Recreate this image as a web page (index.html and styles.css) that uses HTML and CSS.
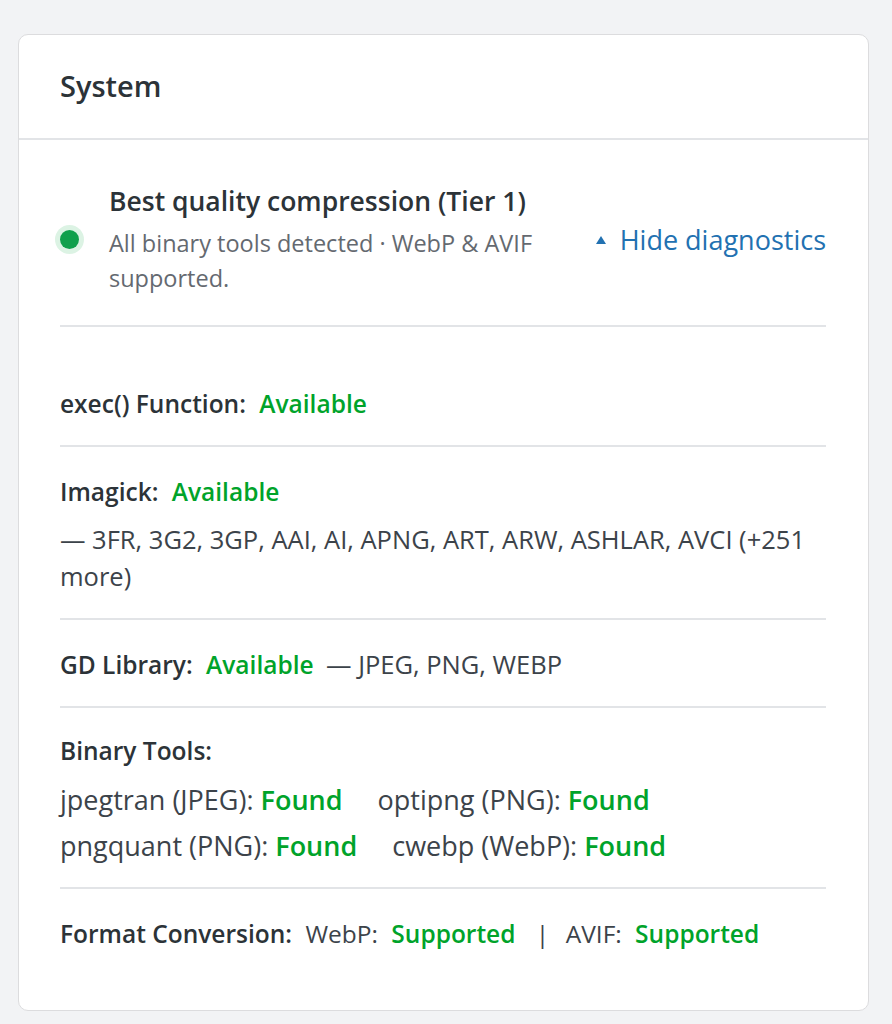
FILE: index.html
```html
<!DOCTYPE html>
<html lang="en">
<head>
<meta charset="UTF-8">
<meta name="viewport" content="width=device-width, initial-scale=1.0">
<title>System</title>
<link rel="stylesheet" href="styles.css">
</head>
<body>
<div class="card">
    <div class="card-header">
        <h2>System</h2>
    </div>
    <div class="card-body">
        <div class="status">
            <span class="dot"></span>
            <div class="status-text">
                <div class="status-title">Best quality compression (Tier 1)</div>
                <div class="status-sub">All binary tools detected · WebP &amp; AVIF supported.</div>
            </div>
            <a href="#" class="toggle"><span class="arrow"></span>Hide diagnostics</a>
        </div>

        <div class="diagnostics">
            <div class="row">
                <span class="label">exec() Function:</span>
                <span class="ok">Available</span>
            </div>
            <div class="row">
                <span class="label">Imagick:</span>
                <span class="ok">Available</span>
                <div class="formats">— 3FR, 3G2, 3GP, AAI, AI, APNG, ART, ARW, ASHLAR, AVCI (+251 more)</div>
            </div>
            <div class="row">
                <span class="label">GD Library:</span>
                <span class="ok">Available</span>
                <span class="plain">— JPEG, PNG, WEBP</span>
            </div>
            <div class="row">
                <span class="label">Binary Tools:</span>
                <div class="tools">
                    <span class="tool">jpegtran (JPEG): <b class="ok">Found</b></span>
                    <span class="tool">optipng (PNG): <b class="ok">Found</b></span>
                    <span class="tool">pngquant (PNG): <b class="ok">Found</b></span>
                    <span class="tool">cwebp (WebP): <b class="ok">Found</b></span>
                </div>
            </div>
            <div class="row last">
                <span class="label">Format Conversion:</span>
                <span class="sublabel">WebP:</span>
                <span class="ok">Supported</span>
                <span class="sep">|</span>
                <span class="sublabel">AVIF:</span>
                <span class="ok">Supported</span>
            </div>
        </div>
    </div>
</div>
</body>
</html>
```

FILE: styles.css
```css
body {
    margin: 0;
    padding: 34px 23px 14px 18px;
    background-color: #f2f3f5;
    font-family: "Open Sans", "Noto Sans", sans-serif;
    color: #3c434a;
}
.card {
    background: #fff;
    border: 1px solid #dcdcde;
    border-radius: 10px;
}
.card-header {
    padding: 33px 41px 34px 41px;
    border-bottom: 2px solid #e2e4e7;
}
.card-header h2 {
    margin: 0;
    font-size: 29px;
    line-height: 36px;
    font-weight: 600;
    color: #2c3338;
}
.card-body {
    padding: 43px 42px 35px 41px;
}
.status {
    display: flex;
    align-items: center;
    padding-bottom: 29px;
    border-bottom: 2px solid #e2e4e7;
}
.dot {
    flex: none;
    width: 19px;
    height: 19px;
    margin: 0 30px 0 0;
    border-radius: 50%;
    background: #10a04c;
    box-shadow: 0 0 0 5px #dcf3e4;
}
.status-text {
    flex: 1;
    max-width: 470px;
}
.status-title {
    font-size: 26.5px;
    line-height: 36px;
    font-weight: 600;
    color: #2c3338;
}
.status-sub {
    margin-top: 7px;
    font-size: 23.5px;
    line-height: 35px;
    color: #646970;
}
.toggle {
    margin-left: auto;
    font-size: 27px;
    line-height: 36px;
    color: #2271b1;
    text-decoration: none;
}
.arrow {
    display: inline-block;
    width: 0;
    height: 0;
    margin-right: 14px;
    vertical-align: 6px;
    border-left: 5px solid transparent;
    border-right: 5px solid transparent;
    border-bottom: 8px solid #2271b1;
}
.diagnostics {
    margin-top: 32px;
}
.row {
    padding: 26px 0 23px;
    font-size: 24.5px;
    line-height: 37px;
    border-bottom: 2px solid #e2e4e7;
}
.row:nth-child(4) {
    padding-top: 24px;
}
.row.last {
    border-bottom: none;
    padding-top: 26px;
}
.label {
    font-weight: 600;
    color: #2c3338;
    margin-right: 7px;
}
.sublabel {
    margin-right: 7px;
}
.ok {
    font-weight: 600;
    color: #00a32a;
}
.plain {
    margin-left: 6px;
    font-size: 25.5px;
}
.sep {
    margin: 0 10px 0 14px;
}
.formats {
    margin-top: 11px;
    font-size: 25.5px;
}
.tools {
    display: flex;
    flex-wrap: wrap;
    column-gap: 35px;
    row-gap: 9px;
    margin-top: 12px;
    max-width: 640px;
    font-size: 27px;
}
```
